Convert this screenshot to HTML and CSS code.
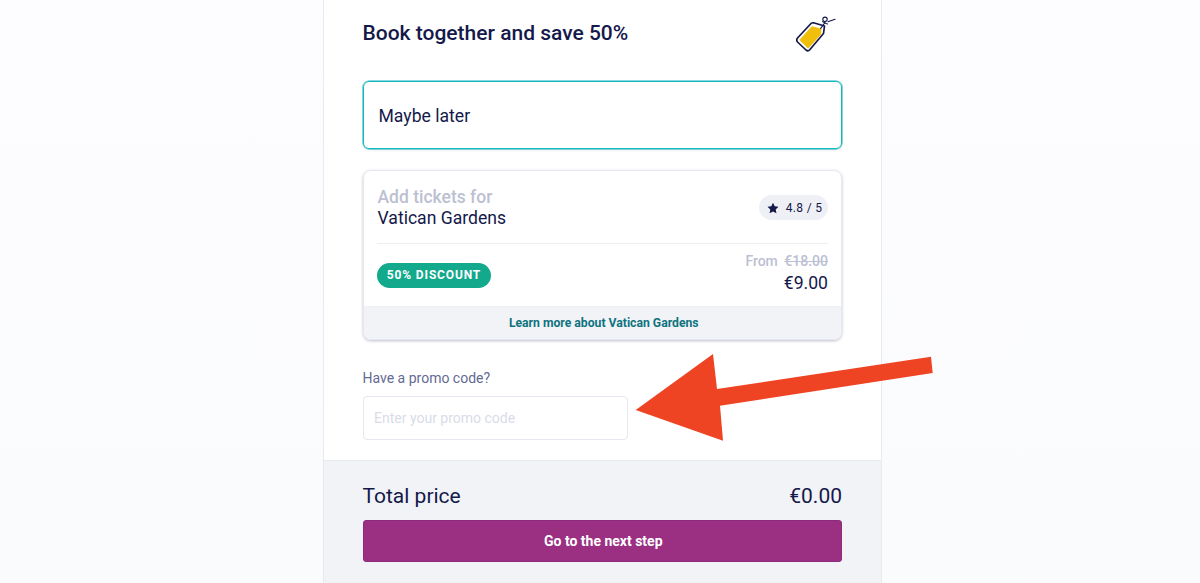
FILE: index.html
```html
<!DOCTYPE html>
<html lang="en">
<head>
<meta charset="utf-8">
<title>Book together</title>
<link rel="stylesheet" href="styles.css">
</head>
<body>
<main class="panel">
  <section class="content">
    <header class="head">
      <h1 class="title">Book together and save 50%</h1>
      <svg class="tag" width="42" height="38" viewBox="0 0 42 38" aria-hidden="true">
        <path d="M2.5 23 16 8.5Q17 7.5 18.5 7.8L29.5 11 28.5 18.5 14.5 35Q13 36.5 11 35L2.5 27Q1 25 2.5 23Z" fill="#fff" stroke="#14194a" stroke-width="1.7" stroke-linejoin="round"/>
        <path d="M4.8 25 16.8 11.8 26 14 25.5 19.5 13.2 33Z" fill="#f0bf0c" stroke="#f0bf0c" stroke-width="1" stroke-linejoin="round"/>
        <path d="M25.7 13.3Q28.5 10 30.5 6.5M27.7 6.7Q29 8 32.5 9M33 6.7 40 4.3" fill="none" stroke="#14194a" stroke-width="1.2" stroke-linecap="round"/>
        <circle cx="30" cy="4.3" r="2.2" fill="none" stroke="#14194a" stroke-width="1.1"/>
      </svg>
    </header>

    <div class="option">Maybe later</div>

    <article class="offer">
      <div class="offer-body">
        <div class="offer-top">
          <div class="offer-name">
            <div class="muted-lead">Add tickets for</div>
            <div class="name">Vatican Gardens</div>
          </div>
          <div class="rating">
            <svg class="star" width="12" height="12" viewBox="0 0 24 24" aria-hidden="true"><path d="M12 1.5 15.4 8.6 23 9.6 17.4 15 18.9 22.7 12 19 5.1 22.7 6.6 15 1 9.6 8.6 8.6Z" fill="#14194a"/></svg>
            <span>4.8 / 5</span>
          </div>
        </div>
        <div class="offer-bottom">
          <span class="badge">50% DISCOUNT</span>
          <div class="prices">
            <div class="was">From <s class="strike">€18.00</s></div>
            <div class="now">€9.00</div>
          </div>
        </div>
      </div>
      <div class="offer-foot">Learn more about Vatican Gardens</div>
    </article>

    <label class="promo-label" for="promo">Have a promo code?</label>
    <input class="promo-input" id="promo" type="text" placeholder="Enter your promo code">
  </section>

  <footer class="summary">
    <div class="total">
      <span>Total price</span>
      <span>€0.00</span>
    </div>
    <button class="next" type="button">Go to the next step</button>
  </footer>
</main>

<svg class="arrow" width="1200" height="583" viewBox="0 0 1200 583" aria-hidden="true">
  <polygon points="635.7,410 713,354 717,389 931,356.7 932.7,373 720,405.7 723,440.7" fill="#ee4423"/>
</svg>
</body>
</html>
```

FILE: styles.css
```css
* { box-sizing: border-box; }

html, body { margin: 0; height: 583px; overflow: hidden; }

body {
  position: relative;
  font-family: Roboto, "Liberation Sans", sans-serif;
  color: #14194a;
  background: linear-gradient(#fdfdff 0, #fcfcfe 150px, #fafbfd 100%);
}

.panel {
  width: 559px;
  height: 583px;
  margin-left: 323px;
  background: #fff;
  border-left: 1px solid #e8eaf0;
  border-right: 1px solid #e8eaf0;
  display: flex;
  flex-direction: column;
}

.content {
  height: 460px;
  padding: 0 39px 0 38.5px;
  display: flex;
  flex-direction: column;
  flex: none;
}

.head {
  height: 81px;
  flex: none;
  display: flex;
  justify-content: space-between;
  align-items: flex-start;
}

.title {
  margin: 21px 0 0;
  font-size: 21px;
  line-height: 24px;
  font-weight: 500;
}

.tag { margin: 15px 5px 0 0; }

.option {
  height: 68px;
  flex: none;
  display: flex;
  align-items: center;
  padding: 1px 0 0 15px;
  border: 1px solid #16b8bd;
  border-radius: 6px;
  font-size: 17.6px;
  box-shadow: 0 0 0 0.5px #16b8bd, 0 1px 3px rgba(20, 25, 74, 0.12);
}

.offer {
  margin-top: 21px;
  height: 170px;
  flex: none;
  display: flex;
  flex-direction: column;
  border: 1px solid #e6e8ef;
  border-radius: 8px;
  overflow: hidden;
  box-shadow: 0 1px 3px rgba(20, 25, 74, 0.28);
}

.offer-body {
  flex: 1;
  padding: 0 13px 0 14px;
}

.offer-top {
  height: 73px;
  margin-left: -0.5px;
  display: flex;
  justify-content: space-between;
  align-items: center;
  border-bottom: 1px solid #eceef3;
  padding: 1px 0 0 0.5px;
}

.muted-lead { color: #bcc0d2; font-size: 17.5px; line-height: 21px; font-weight: 500; }
.name { font-size: 17.6px; line-height: 21px; }

.rating {
  height: 25px;
  width: 69px;
  padding-left: 2px;
  display: flex;
  align-items: center;
  justify-content: center;
  gap: 7px;
  border-radius: 13px;
  background: #eff0f6;
  font-size: 12px;
  letter-spacing: 0.3px;
}

.offer-bottom {
  display: flex;
  justify-content: space-between;
  align-items: center;
  height: 62px;
  margin-left: -0.5px;
}

.badge {
  height: 25px;
  width: 114px;
  display: flex;
  align-items: center;
  justify-content: center;
  border-radius: 13px;
  background: #12a98c;
  color: #fff;
  font-size: 12px;
  font-weight: 700;
  letter-spacing: 0.85px;
}

.prices { text-align: right; margin-top: -2px; }
.was { color: #bcc0d2; font-size: 14px; line-height: 18px; font-weight: 500; }
.strike { margin-left: 3px; }
.now { font-size: 17.6px; line-height: 26px; }

.offer-foot {
  height: 33px;
  flex: none;
  display: flex;
  align-items: center;
  justify-content: center;
  padding-left: 3px;
  background: #f2f3f7;
  border-top: 1px solid #eef0f4;
  color: #0e7380;
  font-size: 12.2px;
  font-weight: 700;
}

.promo-label {
  margin-top: 29px;
  font-size: 14px;
  line-height: 18px;
  color: #636a94;
}

.promo-input {
  margin-top: 9px;
  width: 265.5px;
  height: 43.5px;
  padding: 0 10.5px;
  border: 1px solid #e6e8ef;
  border-radius: 4px;
  background: #fff;
  font: 14px Roboto, "Liberation Sans", sans-serif;
}

.promo-input::placeholder { color: #d9dce8; opacity: 1; }

.summary {
  flex: 1;
  background: #f2f3f7;
  border-top: 1px solid #e8eaf0;
  padding: 0 39px 0 38.5px;
}

.total {
  height: 59px;
  display: flex;
  justify-content: space-between;
  align-items: center;
  padding-top: 11px;
  font-size: 21px;
}

.next {
  display: block;
  width: 100%;
  height: 42px;
  padding-left: 8px;
  border: 1px solid #8b2b7e;
  border-radius: 3px;
  background: #9b2f82;
  color: #fff;
  font: 700 14px Roboto, "Liberation Sans", sans-serif;
}

.arrow {
  position: absolute;
  left: 0;
  top: 0;
  pointer-events: none;
}
```
